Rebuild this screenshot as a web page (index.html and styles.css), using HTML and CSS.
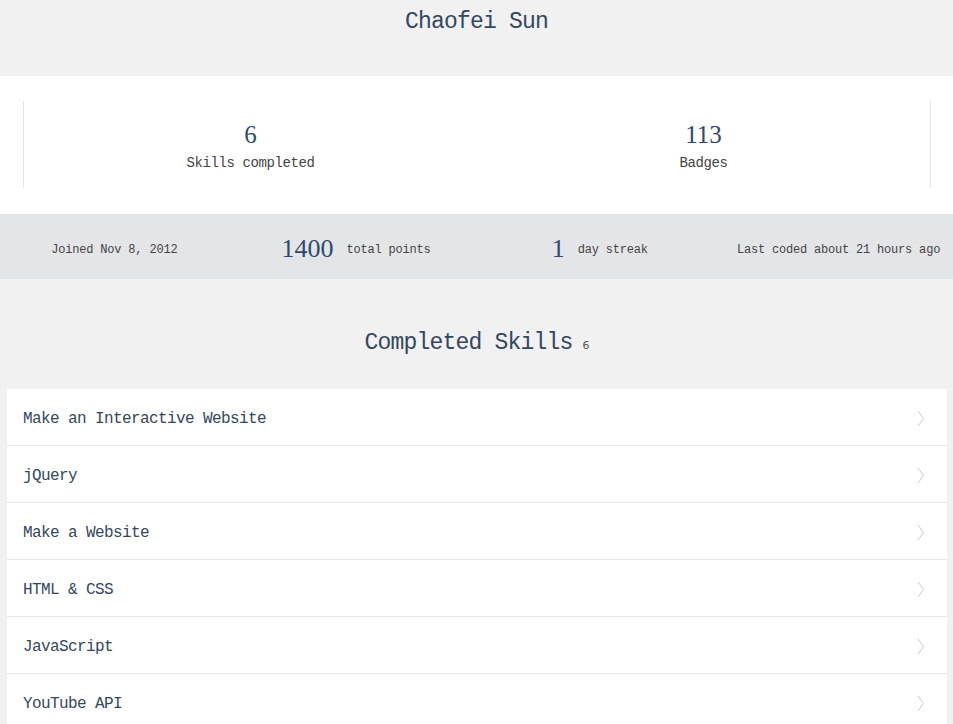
FILE: index.html
```html
<!DOCTYPE html>
<html>
<head>
<meta charset="utf-8">
<link rel="stylesheet" href="styles.css">
</head>
<body>
<header class="profile-head">
  <h1 class="profile-name">Chaofei Sun</h1>
</header>
<section class="summary">
  <div class="summary-box">
    <div class="summary-col">
      <div class="big-num">6</div>
      <div class="summary-label">Skills completed</div>
    </div>
    <div class="summary-col">
      <div class="big-num">113</div>
      <div class="summary-label">Badges</div>
    </div>
  </div>
</section>
<section class="stats-bar">
  <div class="stat"><span class="stat-label">Joined Nov 8, 2012</span></div>
  <div class="stat stat-points"><span class="stat-num">1400</span><span class="stat-label">total points</span></div>
  <div class="stat stat-streak"><span class="stat-num">1</span><span class="stat-label">day streak</span></div>
  <div class="stat stat-last"><span class="stat-label">Last coded about 21 hours ago</span></div>
</section>
<section class="skills">
  <h2 class="skills-title">Completed Skills <span class="skills-count">6</span></h2>
  <ul class="skill-list">
    <li class="skill-row"><span>Make an Interactive Website</span><svg class="chev" width="8" height="17" viewBox="0 0 8 17"><path d="M1 1 L6.5 8.5 L1 16" fill="none" stroke="#c3cbd4" stroke-width="1"/></svg></li>
    <li class="skill-row"><span>jQuery</span><svg class="chev" width="8" height="17" viewBox="0 0 8 17"><path d="M1 1 L6.5 8.5 L1 16" fill="none" stroke="#c3cbd4" stroke-width="1"/></svg></li>
    <li class="skill-row"><span>Make a Website</span><svg class="chev" width="8" height="17" viewBox="0 0 8 17"><path d="M1 1 L6.5 8.5 L1 16" fill="none" stroke="#c3cbd4" stroke-width="1"/></svg></li>
    <li class="skill-row"><span>HTML &amp; CSS</span><svg class="chev" width="8" height="17" viewBox="0 0 8 17"><path d="M1 1 L6.5 8.5 L1 16" fill="none" stroke="#c3cbd4" stroke-width="1"/></svg></li>
    <li class="skill-row"><span>JavaScript</span><svg class="chev" width="8" height="17" viewBox="0 0 8 17"><path d="M1 1 L6.5 8.5 L1 16" fill="none" stroke="#c3cbd4" stroke-width="1"/></svg></li>
    <li class="skill-row"><span>YouTube API</span><svg class="chev" width="8" height="17" viewBox="0 0 8 17"><path d="M1 1 L6.5 8.5 L1 16" fill="none" stroke="#c3cbd4" stroke-width="1"/></svg></li>
  </ul>
</section>
</body>
</html>
```
FILE: styles.css
```css
* { box-sizing: border-box; }
html, body {
  margin: 0;
  padding: 0;
  background: #f0f1f0;
  font-family: "Liberation Mono", "Courier New", monospace;
  color: #444;
}
.profile-head {
  height: 76px;
  display: flex;
  justify-content: center;
  padding-top: 8px;
}
.profile-name {
  margin: 0;
  font-weight: normal;
  font-size: 23px;
  letter-spacing: -0.8px;
  line-height: 28px;
  color: #34475e;
}
.summary {
  background: #fff;
  height: 138px;
  padding: 25px 22px 26px 23px;
}
.summary-box {
  height: 87px;
  border-left: 1px solid #e6e6e6;
  border-right: 1px solid #e6e6e6;
  display: flex;
  padding-top: 4px;
}
.summary-col {
  flex: 1;
  display: flex;
  flex-direction: column;
  align-items: center;
  justify-content: center;
}
.big-num {
  font-family: "Liberation Serif", "Times New Roman", serif;
  font-size: 25px;
  line-height: 28px;
  color: #2e4a6e;
}
.summary-label {
  font-size: 14px;
  letter-spacing: -0.4px;
  line-height: 20px;
  margin-top: 4px;
  color: #444;
}
.stats-bar {
  background: #e4e5e7;
  height: 65px;
  display: flex;
  align-items: center;
  padding-top: 5px;
}
.stat {
  flex: 1;
  display: flex;
  justify-content: center;
  align-items: center;
}
.stat-points { padding-left: 13px; }
.stat-streak { padding-left: 15px; }
.stat-last { padding-left: 10px; }
.stat-num {
  font-family: "Liberation Serif", "Times New Roman", serif;
  font-size: 26px;
  line-height: 28px;
  color: #2e4a6e;
  margin-right: 13px;
}
.stat-label {
  font-size: 12px;
  letter-spacing: -0.2px;
  line-height: 16px;
  color: #444;
  padding-top: 2px;
}
.skills {
  padding: 0 6px 0 7px;
}
.skills-title {
  margin: 0;
  height: 110px;
  display: flex;
  justify-content: center;
  align-items: center;
  padding-top: 18px;
  font-weight: normal;
  font-size: 23px;
  letter-spacing: -0.8px;
  color: #34475e;
}
.skills-count {
  font-family: "DejaVu Sans", sans-serif;
  font-size: 11px;
  letter-spacing: 0;
  color: #555;
  margin-left: 10px;
  margin-top: 5px;
}
.skill-list {
  list-style: none;
  margin: 0;
  padding: 0;
  background: #fff;
}
.skill-row {
  height: 57px;
  border-bottom: 1px solid #e6e6e6;
  display: flex;
  align-items: center;
  justify-content: space-between;
  padding: 3px 22px 0 16px;
  font-size: 16px;
  letter-spacing: -0.6px;
  color: #34475e;
}
.chev { display: block; }
```
